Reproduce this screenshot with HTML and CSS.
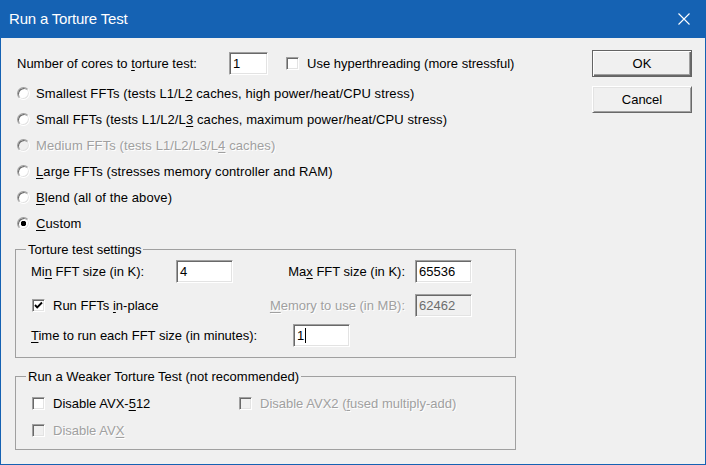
FILE: index.html
```html
<!DOCTYPE html>
<html lang="en">
<head>
    <meta charset="UTF-8">
    <meta name="viewport" content="width=device-width, initial-scale=1.0">
    <title>Run a Torture Test</title>
    <link rel="stylesheet" href="styles.css">
</head>
<body>

<div class="window">
    <div class="titlebar">
        <span class="title">Run a Torture Test</span>
        <svg class="close" width="12" height="12" viewBox="0 0 12 12">
            <path d="M0.5 0.5 L11.5 11.5 M11.5 0.5 L0.5 11.5" stroke="#fff" stroke-width="1.1" fill="none"/>
        </svg>
    </div>

    <div class="client">
        <div class="main">
            <div class="cores-row">
                <span class="cores-label">Number of cores to <u>t</u>orture test:</span>
                <span class="edit cores-edit">1</span>
                <span class="check ht-check"></span>
                <span class="check-text">Use hyperthreading (more stressful)</span>
            </div>

            <div class="radio-list">
                <div class="radio-row"><span class="radio"></span><span>Smallest FFTs (tests L1/L<u>2</u> caches, high power/heat/CPU stress)</span></div>
                <div class="radio-row"><span class="radio"></span><span>Small FFTs (tests L1/L2/L<u>3</u> caches, maximum power/heat/CPU stress)</span></div>
                <div class="radio-row disabled"><span class="radio"></span><span>Medium FFTs (tests L1/L2/L3/L<u>4</u> caches)</span></div>
                <div class="radio-row"><span class="radio"></span><span><u>L</u>arge FFTs (stresses memory controller and RAM)</span></div>
                <div class="radio-row"><span class="radio"></span><span><u>B</u>lend (all of the above)</span></div>
                <div class="radio-row"><span class="radio checked"></span><span><u>C</u>ustom</span></div>
            </div>

            <fieldset class="group settings">
                <legend>Torture test settings</legend>
                <div class="group-body">
                    <div class="set-row">
                        <span class="min-label">Mi<u>n</u> FFT size (in K):</span>
                        <span class="edit fft-edit">4</span>
                        <span class="right-label">Ma<u>x</u> FFT size (in K):</span>
                        <span class="edit fft-edit">65536</span>
                    </div>
                    <div class="set-row mem-row">
                        <span class="inplace">
                            <span class="check checked">
                                <svg width="11" height="11" viewBox="0 0 11 11">
                                    <path d="M2 5 L4.2 7.3 L9 2.5" stroke="#000" stroke-width="1.9" fill="none"/>
                                </svg>
                            </span>
                            <span class="check-text">Run FFTs <u>i</u>n-place</span>
                        </span>
                        <span class="right-label disabled"><u>M</u>emory to use (in MB):</span>
                        <span class="edit fft-edit disabled-edit">62462</span>
                    </div>
                    <div class="set-row time-row">
                        <span class="time-label"><u>T</u>ime to run each FFT size (in minutes):</span>
                        <span class="edit fft-edit">1<span class="caret"></span></span>
                    </div>
                </div>
            </fieldset>

            <fieldset class="group weaker">
                <legend>Run a Weaker Torture Test (not recommended)</legend>
                <div class="group-body weaker-body">
                    <div class="avx-row">
                        <span class="avx-cell">
                            <span class="check"></span>
                            <span class="check-text">Disable AVX-<u>5</u>12</span>
                        </span>
                        <span class="avx-cell disabled">
                            <span class="check"></span>
                            <span class="check-text">Disable AVX2 (<u>f</u>used multiply-add)</span>
                        </span>
                    </div>
                    <div class="avx-row second">
                        <span class="avx-cell disabled">
                            <span class="check"></span>
                            <span class="check-text">Disable AV<u>X</u></span>
                        </span>
                    </div>
                </div>
            </fieldset>
        </div>

        <div class="side">
            <button class="btn default">OK</button>
            <button class="btn">Cancel</button>
        </div>
    </div>
</div>

</body>
</html>
```

FILE: styles.css
```css
body {
    margin: 0;
    font-family: "Liberation Sans", Arial, sans-serif;
    font-size: 13px;
    color: #000;
    background-color: #1562b3;
}
.window {
    width: 706px;
    height: 465px;
    display: flex;
    flex-direction: column;
    background-color: #1562b3;
}
.titlebar {
    height: 38px;
    flex: none;
    display: flex;
    align-items: center;
    justify-content: space-between;
    padding: 0 16px 0 9px;
}
.title {
    color: white;
    font-size: 15px;
    letter-spacing: -0.2px;
    margin-top: -1px;
}
.close {
    display: block;
    margin-top: -1px;
}
.client {
    flex: 1;
    margin: 0 1px 1px 1px;
    background-color: #f0f0f0;
    display: flex;
}
.main {
    width: 501px;
    padding: 14px 0 0 14px;
}
.side {
    margin-left: auto;
    margin-right: 13px;
    padding-top: 12px;
    display: flex;
    flex-direction: column;
    gap: 9px;
}

u {
    text-decoration-thickness: 1px;
    text-underline-offset: 2px;
}
.disabled {
    color: #a0a0a0;
    text-shadow: 1px 1px 0 #fff;
}

/* sunken edit box */
.edit {
    box-sizing: border-box;
    height: 23px;
    display: flex;
    align-items: center;
    padding-left: 3px;
    background-color: white;
    border: 1px solid;
    border-color: #a0a0a0 #fff #fff #a0a0a0;
    box-shadow: inset 1px 1px 0 #696969, inset -1px -1px 0 #e3e3e3;
}
.disabled-edit {
    background-color: #f0f0f0;
    color: #6d6d6d;
}
.caret {
    display: inline-block;
    width: 1px;
    height: 15px;
    margin-left: 1px;
    background-color: #000;
}

.check {
    box-sizing: border-box;
    width: 13px;
    height: 13px;
    flex: none;
    background-color: white;
    border: 1px solid;
    border-color: #a0a0a0 #fff #fff #a0a0a0;
    box-shadow: inset 1px 1px 0 #696969, inset -1px -1px 0 #e3e3e3;
}
.check svg {
    display: block;
}
.disabled .check {
    background-color: #f0f0f0;
}
.check-text {
    margin-left: 8px;
    white-space: nowrap;
}

.radio {
    box-sizing: border-box;
    width: 13px;
    height: 13px;
    flex: none;
    margin-right: 6px;
    border-radius: 50%;
    background-color: white;
    border: 1px solid;
    border-color: #a0a0a0 #fff #fff #a0a0a0;
    box-shadow: inset 1px 1px 0 #696969, inset -1px -1px 0 #e3e3e3;
}
.radio.checked {
    background: radial-gradient(circle, #000 0 2.5px, #fff 3px);
}
.radio-row.disabled .radio {
    background-color: #f0f0f0;
}

.cores-row {
    height: 23px;
    display: flex;
    align-items: center;
    padding-left: 2px;
}
.cores-label {
    width: 212px;
}
.cores-edit {
    width: 39px;
}
.ht-check {
    margin-left: 18px;
}

.radio-list {
    margin-top: 5px;
}
.radio-row {
    height: 26px;
    display: flex;
    align-items: center;
    padding-left: 2px;
    white-space: nowrap;
    letter-spacing: 0.1px;
}

.group {
    margin: 0;
    padding: 0;
    min-width: 0;
    border: 1px solid #a0a0a0;
}
.group legend {
    margin-left: 10px;
    padding: 0 2px;
    line-height: 15px;
}
.settings {
    margin-top: 6px;
}
.group-body {
    padding: 3px 0 10px 15px;
}
.set-row {
    height: 23px;
    display: flex;
    align-items: center;
}
.mem-row {
    margin-top: 11px;
}
.time-row {
    margin-top: 7px;
}
.min-label {
    width: 145px;
}
.fft-edit {
    width: 57px;
}
.right-label {
    width: 182px;
    box-sizing: border-box;
    padding-right: 10px;
    text-align: right;
    white-space: nowrap;
}
.inplace {
    width: 201px;
    padding-left: 1px;
    display: flex;
    align-items: center;
}
.time-label {
    width: 262px;
}

.weaker {
    margin-top: 11px;
}
.weaker-body {
    padding: 9px 0 9px 16px;
}
.avx-row {
    height: 20px;
    display: flex;
    align-items: center;
}
.avx-row.second {
    margin-top: 7px;
}
.avx-cell {
    width: 207px;
    display: flex;
    align-items: center;
}

.btn {
    box-sizing: border-box;
    width: 100px;
    height: 27px;
    padding: 0;
    font-family: "Liberation Sans", Arial, sans-serif;
    font-size: 13px;
    color: #000;
    background-color: #f0f0f0;
    border: 1px solid;
    border-color: #fff #696969 #696969 #fff;
    box-shadow: inset 1px 1px 0 #e3e3e3, inset -1px -1px 0 #a0a0a0;
}
.btn.default {
    border-color: #646464;
    box-shadow: inset 1px 1px 0 #fff, inset -1px -1px 0 #696969, inset -2px -2px 0 #a0a0a0;
}
```
